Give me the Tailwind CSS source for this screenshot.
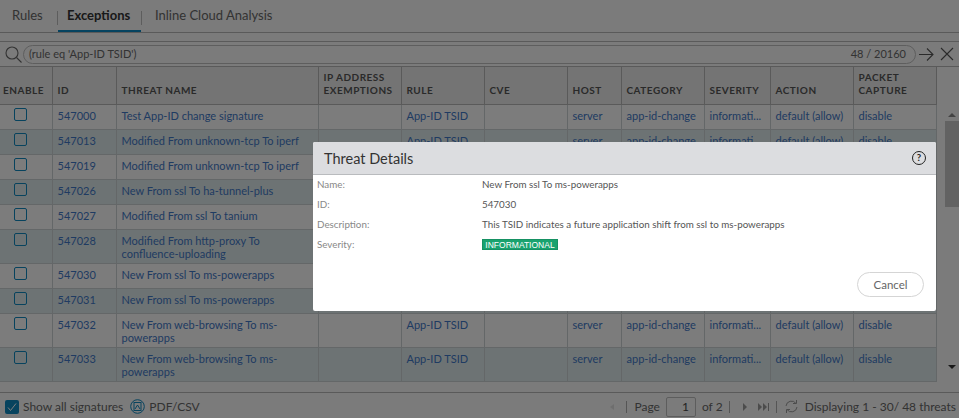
<!DOCTYPE html>
<html lang="en">
<head>
  <meta charset="UTF-8">
  <title>Threat Details</title>
  <script src="https://cdn.jsdelivr.net/npm/@tailwindcss/browser@4"></script>
</head>
<body class="font-['Lato',sans-serif] text-[#333] bg-[#f6f6f6] overflow-hidden">
  <div class="relative w-[959px] h-[418px] overflow-hidden flex flex-col">
    <!-- Tabs -->
    <div class="h-[33px] shrink-0 flex items-start border-b border-[#b4b4b4] text-[13px] leading-[16px]">
      <a class="w-[57px] pl-3 pt-[7px] text-[#666]">Rules</a>
      <span class="w-px h-[14px] mt-[11px] bg-[#bbb]"></span>
      <a class="w-[83px] h-[32px] pl-[9px] pt-[7px] font-bold text-[#333] border-b-2 border-[#0a87c0]">Exceptions</a>
      <span class="w-px h-[14px] mt-[11px] bg-[#bbb]"></span>
      <a class="pl-[13px] pt-[7px] text-[#666]">Inline Cloud Analysis</a>
    </div>

    <!-- Filter -->
    <div class="h-[25px] mt-[8px] shrink-0 flex items-center border-t border-[#b4b4b4] relative">
      <svg class="ml-[5px] w-[17px] h-[17px] shrink-0" viewBox="0 0 17 17" fill="none" stroke="#666" stroke-width="1.1"><circle cx="7" cy="7" r="6"/><path d="M11.5 11.5l5 5"/></svg>
      <div class="ml-[1px] w-[893px] h-[19px] rounded-full border border-[#bdbdbd] flex items-center justify-between pl-[5px] pr-[9px] text-[11px] text-[#666]">
        <span>(rule eq 'App-ID TSID')</span><span>48 / 20160</span>
      </div>
      <svg class="ml-[3px] w-[15px] h-[14px] shrink-0" viewBox="0 0 15 14" fill="none" stroke="#555" stroke-width="1.1"><path d="M0 7.5h14M8 1.5l6 6-6 6"/></svg>
      <svg class="ml-[6px] w-[14px] h-[14px] shrink-0" viewBox="0 0 14 14" fill="none" stroke="#555" stroke-width="1.1"><path d="M1 1l12 12M13 1L1 13"/></svg>
    </div>

    <!-- Grid -->
    <div class="relative h-[327px] shrink-0 border-t border-b border-[#b4b4b4]">
      <table class="table-fixed border-collapse w-[936px] text-[11px] leading-[13px] text-[#3f77c4]">
        <colgroup>
          <col class="w-[52px]"><col class="w-[64px]"><col class="w-[202px]"><col class="w-[83px]"><col class="w-[83px]"><col class="w-[83px]"><col class="w-[54px]"><col class="w-[83px]"><col class="w-[66px]"><col class="w-[83px]"><col class="w-[83px]">
        </colgroup>
        <thead>
          <tr class="h-[37px] bg-[#e8e8e8] text-left align-bottom text-[10px] font-bold tracking-[0.5px] text-[#555]">
            <th class="border-r border-b border-[#b4b4b4] pb-[7px] pl-[3px] font-bold">ENABLE</th>
            <th class="border-r border-b border-[#b4b4b4] pb-[7px] pl-[5px] font-bold">ID</th>
            <th class="border-r border-b border-[#b4b4b4] pb-[7px] pl-[5px] font-bold">THREAT NAME</th>
            <th class="border-r border-b border-[#b4b4b4] pb-[7px] pl-[5px] font-bold">IP ADDRESS EXEMPTIONS</th>
            <th class="border-r border-b border-[#b4b4b4] pb-[7px] pl-[5px] font-bold">RULE</th>
            <th class="border-r border-b border-[#b4b4b4] pb-[7px] pl-[5px] font-bold">CVE</th>
            <th class="border-r border-b border-[#b4b4b4] pb-[7px] pl-[5px] font-bold">HOST</th>
            <th class="border-r border-b border-[#b4b4b4] pb-[7px] pl-[5px] font-bold">CATEGORY</th>
            <th class="border-r border-b border-[#b4b4b4] pb-[7px] pl-[5px] font-bold">SEVERITY</th>
            <th class="border-r border-b border-[#b4b4b4] pb-[7px] pl-[5px] font-bold">ACTION</th>
            <th class="border-r border-b border-[#b4b4b4] pb-[7px] pl-[5px] font-bold">PACKET CAPTURE</th>
          </tr>
        </thead>
        <tbody id="rows"></tbody>
      </table>
      <!-- Scrollbar -->
      <div class="absolute right-0 top-[38px] bottom-0 w-[14px] flex flex-col items-center">
        <div class="mt-[8px] w-0 h-0 border-x-[4px] border-x-transparent border-b-[4px] border-b-[#888]"></div>
        <div class="mt-[4px] w-[14px] h-[86px] bg-[#c4c4c4]"></div>
        <div class="mt-[158px] w-0 h-0 border-x-[4px] border-x-transparent border-t-[4px] border-t-[#333]"></div>
      </div>
    </div>

    <!-- Footer -->
    <div class="flex-1 flex items-center text-[12px] text-[#666] pt-[2px]">
      <span class="ml-[5px] w-[14px] h-[14px] rounded-[2px] bg-[#0f86bd] flex items-center justify-center">
        <svg class="w-[10px] h-[10px]" viewBox="0 0 10 10" fill="none" stroke="#fff" stroke-width="1"><path d="M1 5.5l2.5 3L9 1.500"/></svg>
      </span>
      <span class="ml-[4px]">Show all signatures</span>
      <svg class="ml-[7px] w-[15px] h-[15px]" viewBox="0 0 15 15" fill="none" stroke="#0f86bd" stroke-width="1"><circle cx="7.5" cy="7.5" r="6.8"/><rect x="4" y="3.5" width="7" height="8"/><path d="M5 10l2.5-4L10 10"/></svg>
      <span class="ml-[4px]">PDF/CSV</span>
      <div class="ml-auto flex items-center h-full">
        <span class="w-0 h-0 border-y-[3px] border-y-transparent border-r-[4px] border-r-[#ddd]"></span>
        <span class="ml-[12px] w-px h-[12px] bg-[#aaa]"></span>
        <span class="ml-[7px]">Page</span>
        <span class="ml-[6px] w-[30px] h-[20px] border border-[#bbb] rounded-[2px] flex items-center justify-end pr-[6px] text-[#444]">1</span>
        <span class="ml-[6px]">of 2</span>
        <span class="ml-[6px] w-px h-[12px] bg-[#aaa]"></span>
        <span class="ml-[13px] w-0 h-0 border-y-[4px] border-y-transparent border-l-[4px] border-l-[#999]"></span>
        <svg class="ml-[11px] w-[11px] h-[8px]" viewBox="0 0 11 8" fill="#999"><path d="M0 0l4 4-4 4zM5 0l4 4-4 4z"/><rect x="10" width="1" height="8"/></svg>
        <span class="ml-[7px] w-px h-[12px] bg-[#aaa]"></span>
        <svg class="ml-[8px] w-[13px] h-[13px]" viewBox="0 0 13 13" fill="none" stroke="#999"><path d="M1 6a5.500 5.500 0 0 1 10-2.500M12 7a5.500 5.500 0 0 1-10 2.500M8 3.500h3.500V0M5 9.500H1.500V13"/></svg>
        <span class="ml-[7px] mr-[3px]">Displaying 1 - 30/ 48 threats</span>
      </div>
    </div>

    <!-- Overlay + dialog -->
    <div class="absolute inset-0 bg-black/50"></div>
    <div class="absolute left-[313px] top-[142px] w-[623px] h-[169px] bg-white rounded-[2px] text-[9.8px] leading-[13px] text-[#555]">
      <div class="h-[33px] bg-[#dcdde0] border-b border-[#b9bbbe] flex items-center justify-between pl-[11px] pr-[10px] rounded-t-[2px]">
        <span class="text-[14.5px] text-[#333]">Threat Details</span>
        <span class="w-[14px] h-[14px] rounded-full border-[1.5px] border-[#222] text-[9.5px] leading-[11px] font-bold text-center text-[#222]">?</span>
      </div>
      <dl class="grid grid-cols-[165px_1fr] pl-1 pt-[3px] auto-rows-[20px]">
        <dt class="text-[#888]">Name:</dt><dd>New From ssl To ms-powerapps</dd>
        <dt class="text-[#888]">ID:</dt><dd>547030</dd>
        <dt class="text-[#888]">Description:</dt><dd>This TSID indicates a future application shift from ssl to ms-powerapps</dd>
        <dt class="text-[#888]">Severity:</dt>
        <dd><span class="block mt-px w-[76px] h-[11px] bg-[#1aa36f] border border-[#169163] font-['Liberation_Sans',sans-serif] text-[8.5px] leading-[10px] text-white text-center">INFORMATIONAL</span></dd>
      </dl>
      <button class="absolute right-[12px] bottom-[14px] w-[67px] h-[25px] rounded-full border border-[#d5d5d5] bg-white text-[11.5px] text-[#666]">Cancel</button>
    </div>
  </div>

  <script>
    var rows = [
      ["547000", "Test App-ID change signature", 25],
      ["547013", "Modified From unknown-tcp To iperf", 25],
      ["547019", "Modified From unknown-tcp To iperf", 25],
      ["547026", "New From ssl To ha-tunnel-plus", 25],
      ["547027", "Modified From ssl To tanium", 25],
      ["547028", "Modified From http-proxy To confluence-uploading", 34],
      ["547030", "New From ssl To ms-powerapps", 25],
      ["547031", "New From ssl To ms-powerapps", 25],
      ["547032", "New From web-browsing To ms-powerapps", 34],
      ["547033", "New From web-browsing To ms-powerapps", 34]
    ];
    var cell = "border-r border-b border-[#c8ced1] pl-[5px] pt-[4px] align-top overflow-hidden";
    document.getElementById("rows").innerHTML = rows.map(function (r, i) {
      return '<tr class="' + (i % 2 ? 'bg-[#dbe6e8]' : 'bg-[#f8f8f8]') + '" style="height:' + r[2] + 'px">' +
        '<td class="border-r border-b border-[#c8ced1] align-top pt-[3px]"><span class="block ml-[14px] w-[13px] h-[13px] rounded-[2px] border border-[#0f86bd]"></span></td>' +
        '<td class="' + cell + '">' + r[0] + '</td>' +
        '<td class="' + cell + '">' + r[1] + '</td>' +
        '<td class="' + cell + '"></td>' +
        '<td class="' + cell + '">App-ID TSID</td>' +
        '<td class="' + cell + '"></td>' +
        '<td class="' + cell + '">server</td>' +
        '<td class="' + cell + '">app-id-change</td>' +
        '<td class="' + cell + '">informati...</td>' +
        '<td class="' + cell + '">default (allow)</td>' +
        '<td class="' + cell + '">disable</td></tr>';
    }).join("");
  </script>
</body>
</html>
